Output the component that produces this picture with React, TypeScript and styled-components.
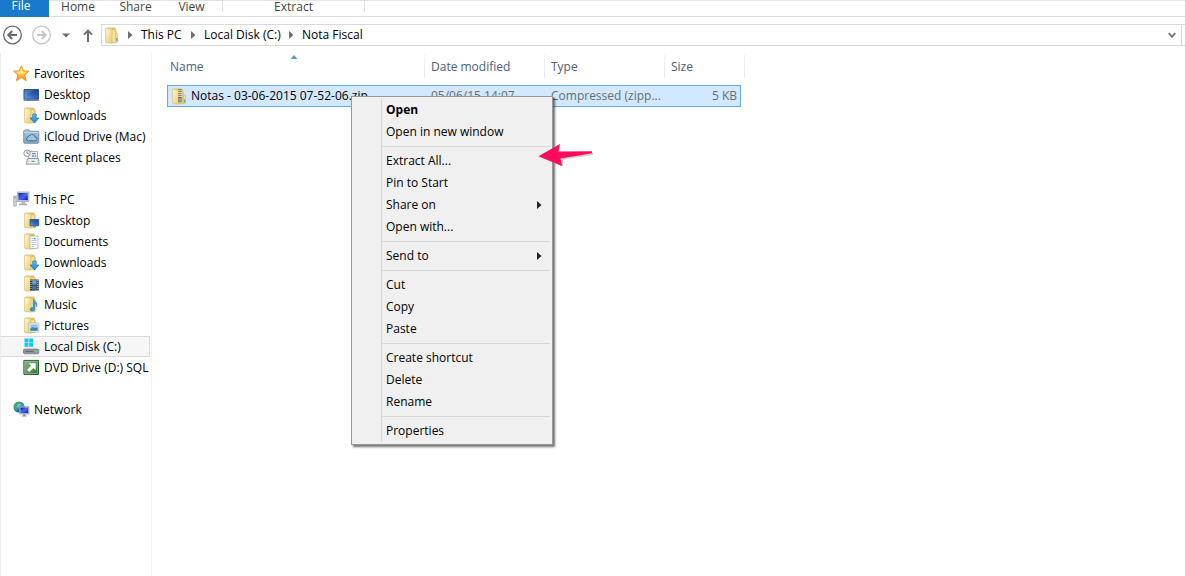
import React from 'react';
import styled, { createGlobalStyle, css } from 'styled-components';

const GlobalStyle = createGlobalStyle`
  * { box-sizing: border-box; }
  body {
    margin: 0;
    background: #fff;
    color: #000;
    font-family: 'Segoe UI', 'Open Sans', 'Noto Sans', sans-serif;
    font-size: 12px;
    line-height: 20px;
  }
  button { font: inherit; color: inherit; background: none; border: 0; padding: 0; margin: 0; }
  ul { list-style: none; margin: 0; padding: 0; }
  svg { display: block; flex: none; }
`;

const Window = styled.div`
  position: relative;
  display: flex;
  flex-direction: column;
  min-height: 100vh;
  overflow: hidden;
`;

/* ---------- Ribbon ---------- */
const Ribbon = styled.div`
  display: flex;
  height: 17px;
  border-top: 1px solid #e3e3e3;
  border-bottom: 1px solid #dadbdc;
  color: #444;
`;
const FileTab = styled.button`
  width: 49px;
  height: 17px;
  margin-top: -1px;
  padding-right: 7px;
  padding-bottom: 6px;
  background: #1979ca;
  color: #fff;
  line-height: 11px;
`;
const Tab = styled.button<{ $width: number; $context?: boolean }>`
  width: ${p => p.$width}px;
  height: 11px;
  line-height: 11px;
  ${p => p.$context && css`
    margin-left: 3px;
    border: solid #e2e3e4;
    border-width: 0 1px;
  `}
`;

/* ---------- Address row ---------- */
const AddressRow = styled.div`
  display: flex;
  align-items: center;
  height: 36px;
  padding-left: 3px;
`;
const NavButton = styled.button<{ $width: number }>`
  display: flex;
  align-items: center;
  width: ${p => p.$width}px;
  height: 22px;
`;
const AddressBox = styled.nav`
  display: flex;
  align-items: center;
  flex: 1;
  height: 22px;
  padding-left: 2px;
  border: 1px solid #d9d9d9;
`;
const AddressEnd = styled.div`
  width: 3px;
  height: 22px;
  border: solid #d9d9d9;
  border-width: 1px 0;
`;
const Crumb = styled.button<{ $width: number }>`
  width: ${p => p.$width}px;
  text-align: left;
  white-space: nowrap;
`;
const Crumbs = styled.div`
  display: flex;
  padding-left: 7px;
`;
const CrumbArrow = styled.span`
  display: flex;
  align-items: center;
  width: 13px;
`;
const HistoryButton = styled.button`
  display: flex;
  align-items: center;
  margin-left: auto;
  padding: 0 5px;
  height: 20px;
`;

/* ---------- Body ---------- */
const Body = styled.div`
  display: flex;
  flex: 1;
  border-left: 1px solid #ececec;
`;
const Sidebar = styled.nav`
  width: 151px;
  flex: none;
  padding: 10px 1px 0 0;
  border-right: 1px solid #f3f3f3;
`;
const Group = styled.ul`
  margin-bottom: 21px;
`;
const Place = styled.a<{ $root?: boolean; $selected?: boolean }>`
  display: flex;
  align-items: center;
  gap: 4px;
  height: 21px;
  padding-left: ${p => (p.$root ? 12 : 22)}px;
  border: 1px solid transparent;
  border-left: 0;
  overflow: hidden;
  color: #000;
  text-decoration: none;
  white-space: nowrap;
  ${p => p.$selected && css`
    background: #f6f6f6;
    border-color: #dcdcdc;
  `}
`;
const Pane = styled.main`
  flex: 1;
  padding: 1px 0 0 15px;
`;

/* ---------- File list ---------- */
const FileTable = styled.table`
  display: block;
  thead, tbody { display: block; }
`;
const HeadRow = styled.tr`
  display: grid;
  grid-template-columns: 258px 120px 120px 80px;
  height: 22px;
  margin-bottom: 9px;
  color: #4c607a;
`;
const HeadCell = styled.th<{ $first?: boolean }>`
  position: relative;
  padding: 3px 0 0 ${p => (p.$first ? 3 : 6)}px;
  border-right: 1px solid;
  border-image: linear-gradient(#f4f7fb, #dbe5f1) 1;
  text-align: left;
  font-weight: 400;
`;
const SortMark = styled.svg`
  position: absolute;
  top: 1px;
  left: 50%;
  margin-left: -6px;
`;
const FileRow = styled.tr`
  display: grid;
  grid-template-columns: 257px 120px 120px 75px;
  width: 574px;
  height: 22px;
  border: 1px solid #66a7e8;
  background: #d1e8ff;
  color: #6d6d6d;
`;
const Cell = styled.td<{ $right?: boolean }>`
  padding: 0 3px 0 6px;
  text-align: ${p => (p.$right ? 'right' : 'left')};
  white-space: nowrap;
`;
const NameCell = styled(Cell)`
  display: flex;
  align-items: center;
  gap: 3px;
  padding-left: 3px;
  color: #000;
`;

/* ---------- Context menu ---------- */
const Menu = styled.div`
  position: absolute;
  top: 96px;
  left: 351px;
  width: 202px;
  padding: 2px;
  border: 1px solid #979797;
  background: linear-gradient(90deg, transparent 27px, #d7d7d7 27px, #d7d7d7 28px, transparent 28px) 2px 2px / 100% calc(100% - 4px) no-repeat #f0f0f0;
  box-shadow: 2px 2px 2px rgba(0, 0, 0, 0.55);
`;
const MenuItem = styled.button<{ $bold?: boolean }>`
  display: flex;
  align-items: center;
  justify-content: space-between;
  width: 100%;
  height: 22px;
  padding: 0 8px 0 32px;
  font-weight: ${p => (p.$bold ? 700 : 400)};
`;
const Separator = styled.hr`
  height: 1px;
  margin: 3px 0 3px 28px;
  border: 0;
  background: #d7d7d7;
`;
const Pointer = styled.svg`
  position: absolute;
  top: 140px;
  left: 536px;
`;

/* ---------- Icons ---------- */
const Gradients = styled.svg`
  position: absolute;
`;
const Defs = () => (
  <Gradients width="0" height="0" aria-hidden="true">
    <defs>
      <linearGradient id="gold" x1="0" x2="1" y1="0" y2="1">
        <stop offset="0" stopColor="#fff8d2" /><stop offset="1" stopColor="#ebcd72" />
      </linearGradient>
      <linearGradient id="goldDark" x1="0" x2="1">
        <stop offset="0" stopColor="#f3dc8e" /><stop offset="1" stopColor="#dab95c" />
      </linearGradient>
      <linearGradient id="screen" x1="0" x2="1" y1="1" y2="0">
        <stop offset="0" stopColor="#6fa6e2" /><stop offset=".5" stopColor="#2f64b4" /><stop offset="1" stopColor="#1c3f91" />
      </linearGradient>
      <linearGradient id="mon" x1="0" x2="1" y1="0" y2="1">
        <stop offset="0" stopColor="#0916a8" /><stop offset=".5" stopColor="#4769ee" /><stop offset="1" stopColor="#0a16a0" />
      </linearGradient>
      <linearGradient id="star" x1="0" x2="0" y1="0" y2="1">
        <stop offset="0" stopColor="#ffdf70" /><stop offset=".5" stopColor="#ffc93c" /><stop offset="1" stopColor="#f78a1d" />
      </linearGradient>
      <linearGradient id="cloudFolder" x1="0" x2="0" y1="0" y2="1">
        <stop offset="0" stopColor="#a9c6dc" /><stop offset="1" stopColor="#7fa5c2" />
      </linearGradient>
      <linearGradient id="down" x1="0" x2="0" y1="0" y2="1">
        <stop offset="0" stopColor="#5cc2f5" /><stop offset="1" stopColor="#1c86d8" />
      </linearGradient>
      <linearGradient id="green" x1="0" x2="1" y1="0" y2="1">
        <stop offset="0" stopColor="#92b98c" /><stop offset="1" stopColor="#2c7430" />
      </linearGradient>
      <radialGradient id="globe" cx=".4" cy=".3">
        <stop offset="0" stopColor="#8fdcf8" /><stop offset="1" stopColor="#1467bb" />
      </radialGradient>
    </defs>
  </Gradients>
);

const Icon = ({ children }: { children: React.ReactNode }) => (
  <svg width="17" height="17" viewBox="0 0 17 17" aria-hidden="true">{children}</svg>
);

const FolderBase = () => (
  <>
    <path d="M2 1.5 3 .8h7.500l1 1v1.500h.8v12.500H2z" fill="url(#goldDark)" stroke="#dcbf6b" strokeWidth=".5" />
    <path d="M8 2.800h3.500v12.700H8z" fill="#f6e3a0" stroke="#d5b660" strokeWidth=".5" />
    <path d="M1.500 1.300 7.800 2.300v14L1.500 15z" fill="url(#gold)" stroke="#dcc074" strokeWidth=".6" />
  </>
);

const FolderIcon = () => (
  <Icon>
    <FolderBase />
    <path d="M11.500 6.500h2.200v8.800h-2.200z" fill="#f0da92" stroke="#d8bc6a" strokeWidth=".5" />
    <path d="M12.300 11h1.200v3h-1.200z" fill="#4ba6dc" />
  </Icon>
);
const ZipIcon = () => (
  <Icon>
    <FolderBase />
    <path d="M12.300 7h2.200v8.500h-2.200z" fill="#f0dc98" stroke="#cfae58" strokeWidth=".5" />
    <path d="M13 11.500h1.200v3H13z" fill="#4ba6dc" />
    <path d="M9 1v9" stroke="#555a66" strokeWidth="3" strokeDasharray="1 1" />
    <path d="M9 1v9" stroke="#b5bac4" strokeWidth="1" />
    <path d="M7.800 9.500h2.400v4.500H7.800z" fill="#a5acb6" stroke="#5b606b" strokeWidth=".7" />
  </Icon>
);
const StarIcon = () => (
  <Icon>
    <path d="m8.300.8 2.100 5 5.600.4-4.300 3.700 1.500 5.800-4.900-3.200-4.800 3.200 1.400-5.800L.6 6.200l5.600-.4z" fill="url(#star)" stroke="#ea8a20" strokeWidth=".9" strokeLinejoin="round" />
    <path d="m8.300 3 1.300 3.700 3.600.4-2.900 2-4.700.2-2.300-2.200 3.600-.5z" fill="#fff0a0" opacity=".7" />
  </Icon>
);
const DesktopIcon = () => (
  <Icon>
    <path d="M.5 3h15.500v12H.5z" fill="#a9b8ca" />
    <path d="M1 3.500h14.500v9.600H1z" fill="url(#screen)" stroke="#1d3f7c" strokeWidth=".7" />
    <path d="M1.500 4h9l-9 6z" fill="#fff" opacity=".12" />
    <path d="M.8 13.500h14.900v1.100H.8z" fill="#4d6c93" />
    <path d="M1.500 13.700h1.600v.7H1.500z" fill="#8fd07c" />
  </Icon>
);
const DownloadsIcon = () => (
  <Icon>
    <FolderBase />
    <path d="M9.800 7h3.400v4h2.700l-4.400 5-4.400-5h2.700z" fill="url(#down)" stroke="#1b6fb8" strokeWidth=".7" />
  </Icon>
);
const ICloudIcon = () => (
  <Icon>
    <path d="M.7 3 1.700 1.900h4.500l1 1.300h8l.6.8v10.600l-.7.7H1.300l-.6-.6z" fill="url(#cloudFolder)" stroke="#6489a6" strokeWidth=".8" />
    <path d="M1.100 4.500h14.300" stroke="#c5dbea" strokeWidth=".8" />
    <path d="M5.200 12.800a1.900 1.900 0 0 1-.2-3.700 2 2 0 0 1 2.100-1.500 2.800 2.800 0 0 1 5 1.400 1.900 1.900 0 0 1 .1 3.800z" fill="#a5c4d9" stroke="#3e6788" strokeWidth=".9" />
  </Icon>
);
const RecentIcon = () => (
  <Icon>
    <path d="M5.500 2.500h9v7h-9z" fill="#eef2f5" stroke="#929ba3" strokeWidth=".8" />
    <path d="M9 4h3.800v1.300H9zM9 6.300h2.200v1.500H9z" fill="#6a95bf" />
    <path d="M11.800 6.300h1.400v1.500h-1.400z" fill="#5aaa64" />
    <path d="M4.500 9.500h11l.8 5.700H3.200z" fill="#d8dde1" stroke="#8c949c" strokeWidth=".8" />
    <path d="M6 11.200h8M5.700 13.300h8.800" stroke="#fff" />
    <path d="M8.500 12.300h3" stroke="#747c84" />
    <circle cx="4" cy="4.200" r="3.200" fill="#f8f8f8" stroke="#8d8d8d" strokeWidth=".9" />
    <path d="M4 2.200v2.200h1.700" fill="none" stroke="#666" strokeWidth=".8" />
  </Icon>
);
const PcIcon = () => (
  <Icon>
    <path d="M.7 5h2.600v10H.7z" fill="#d3d6da" stroke="#8f949a" strokeWidth=".6" />
    <path d="M1.200 6.700h1.400" stroke="#4ba54b" />
    <path d="M4.300 1h11.600v9.500H4.300z" fill="#d7dade" stroke="#94989e" strokeWidth=".7" />
    <path d="M5.400 2h9.400v7.200H5.400z" fill="url(#mon)" />
    <path d="M8.100 10.800h4v1.800h-4zM6 12.400h8.200v1.400H6z" fill="#b8bcc1" />
    <path d="M6 13.800h8.200" stroke="#8d9298" strokeWidth=".7" />
  </Icon>
);
const FolderDesktopIcon = () => (
  <Icon>
    <FolderBase />
    <path d="M7 7.500h8.700v6.300H7z" fill="url(#screen)" stroke="#1e4583" strokeWidth=".7" />
    <path d="M10 14.200h3v.8h-3z" fill="#6c7884" />
  </Icon>
);
const DocumentsIcon = () => (
  <Icon>
    <FolderBase />
    <path d="M7 3h8v12.400H7z" fill="#fff" stroke="#9da6ae" strokeWidth=".7" />
    <path d="M8.400 5.500h2M8.400 7.500h5M8.400 9.500h5M8.400 11.500h5M8.400 13.500h3" stroke="#9bb8d2" strokeWidth=".8" />
    <path d="M10.900 4.900h1.500v1.400h-1.500z" fill="#2c75c0" />
  </Icon>
);
const MoviesIcon = () => (
  <Icon>
    <FolderBase />
    <path d="M7 4.500h8.800v11H7z" fill="#3b4046" />
    <path d="M8 5v10M14.800 5v10" stroke="#dce0e4" strokeWidth=".9" strokeDasharray="1 1" />
    <path d="M9.200 5.100h4.400v4.300H9.200z" fill="#62a5dc" /><path d="M9.200 10.500h4.400v4.300H9.200z" fill="#3678b8" />
    <path d="m9.200 9.400 2-2 2.400 2z" fill="#7c9d56" />
  </Icon>
);
const MusicIcon = () => (
  <Icon>
    <FolderBase />
    <path d="M10.300 3c.4 2.400 5 3.200 3.300 7.800.2-2-.9-3.200-1.800-3.600v5.700c0 2.400-4.600 2.900-4.600.5 0-1.600 1.900-2.100 3.100-1.600z" fill="#2c9be0" stroke="#1674b8" strokeWidth=".5" />
  </Icon>
);
const PicturesIcon = () => (
  <Icon>
    <FolderBase />
    <path d="M6 6h9.800v9H6z" fill="#fff" stroke="#9fa6ac" strokeWidth=".7" />
    <path d="M7.300 7.300h7.400v6.400H7.300z" fill="#8cc5ea" />
    <path d="m7.300 11.700 2.200-1.800 2.300 1.200 2.900-.7v3.300H7.300z" fill="#4e80a6" />
  </Icon>
);
const DiskIcon = () => (
  <Icon>
    <path d="M1.500 .6h4v3.800h-4zM6.200 .6h4v3.800h-4zM1.500 5.100h4v3.700h-4zM6.200 5.100h4v3.700h-4z" fill="#12c8f6" />
    <path d="m2.300 9.800-1.800 2h15.300l-1.800-2z" fill="#c8cdd1" />
    <path d="M.5 11.600h15.300v3.400l-.9.800H1.300l-.8-.8z" fill="#8f989f" stroke="#5f6870" strokeWidth=".6" />
    <path d="M2.300 13.500h8" stroke="#5a6066" strokeWidth=".8" />
    <path d="M12.300 12.800h2.300v1.300h-2.300z" fill="#66e05f" />
  </Icon>
);
const DvdIcon = () => (
  <Icon>
    <path d="M.9 1.400h14.600v14H.9z" fill="url(#green)" stroke="#1e5b25" />
    <path d="M1.800 2.300h12.800v12.200H1.800z" fill="none" stroke="#a7c8a3" strokeWidth=".6" />
    <path d="M5.700 4.300h7v7l-2.300-2.300-4.200 4L4 10.800l4.100-4.100z" fill="#fff" />
  </Icon>
);
const NetworkIcon = () => (
  <Icon>
    <circle cx="6" cy="6" r="5.500" fill="url(#globe)" />
    <path d="M2.300 2.600C4 .6 6 .9 7.200 1.200L6 3 4.500 3.400 4.200 5 2.500 6.200 4 8l-.3 2.200C1.500 8.700.2 5.800 2.300 2.600zM8 3.200l2.200-.6 1 3-2 .7z" fill="#3fae49" />
    <path d="M6.500 5.700H16v7.300H6.500z" fill="#c9d1da" stroke="#7f8b99" strokeWidth=".6" />
    <path d="M7.400 6.500h7.800v5.600H7.400z" fill="url(#mon)" />
    <path d="M10.300 13h2v1.600h-2zM8.800 14.600h5v1h-5z" fill="#8d98a4" />
  </Icon>
);

const CircleArrow = ({ color, flip }: { color: string; flip?: boolean }) => (
  <svg width="20" height="20" viewBox="0 0 20 20" fill="none" stroke={color} aria-hidden="true">
    <circle cx="9.500" cy="10" r="8.800" strokeWidth="1.300" />
    <path d={flip ? 'M5 10h8.500M9.800 6l4 4-4 4' : 'M14 10H5.500M9.200 6l-4 4 4 4'} strokeWidth="2" />
  </svg>
);
const RightTriangle = ({ color }: { color: string }) => (
  <svg width="5" height="8" viewBox="0 0 5 8" aria-hidden="true"><path d="M0 0 4.500 4 0 8z" fill={color} /></svg>
);

/* ---------- Data ---------- */
type PlaceData = { label: string; icon: React.FC; root?: boolean; selected?: boolean };
const groups: PlaceData[][] = [
  [
    { label: 'Favorites', icon: StarIcon, root: true },
    { label: 'Desktop', icon: DesktopIcon },
    { label: 'Downloads', icon: DownloadsIcon },
    { label: 'iCloud Drive (Mac)', icon: ICloudIcon },
    { label: 'Recent places', icon: RecentIcon },
  ],
  [
    { label: 'This PC', icon: PcIcon, root: true },
    { label: 'Desktop', icon: FolderDesktopIcon },
    { label: 'Documents', icon: DocumentsIcon },
    { label: 'Downloads', icon: DownloadsIcon },
    { label: 'Movies', icon: MoviesIcon },
    { label: 'Music', icon: MusicIcon },
    { label: 'Pictures', icon: PicturesIcon },
    { label: 'Local Disk (C:)', icon: DiskIcon, selected: true },
    { label: 'DVD Drive (D:) SQLF', icon: DvdIcon },
  ],
  [{ label: 'Network', icon: NetworkIcon, root: true }],
];

const menuSections = [
  ['Open', 'Open in new window'],
  ['Extract All...', 'Pin to Start', 'Share on', 'Open with...'],
  ['Send to'],
  ['Cut', 'Copy', 'Paste'],
  ['Create shortcut', 'Delete', 'Rename'],
  ['Properties'],
];
const submenus = ['Share on', 'Send to'];

const crumbs = [
  { label: 'This PC', width: 50 },
  { label: 'Local Disk (C:)', width: 85 },
  { label: 'Nota Fiscal', width: 70 },
];

export default function App() {
  return (
    <Window>
      <GlobalStyle />
      <Defs />
      <Ribbon>
        <FileTab>File</FileTab>
        <Tab $width={58}>Home</Tab>
        <Tab $width={57}>Share</Tab>
        <Tab $width={55}>View</Tab>
        <Tab $width={143} $context>Extract</Tab>
      </Ribbon>

      <AddressRow>
        <NavButton $width={29} aria-label="Back"><CircleArrow color="#6b6b6b" /></NavButton>
        <NavButton $width={30} aria-label="Forward"><CircleArrow color="#c6c6c6" flip /></NavButton>
        <NavButton $width={21} aria-label="Recent locations">
          <svg width="8" height="5" viewBox="0 0 8 5"><path d="M0 .5h8l-4 4z" fill="#6e6e6e" /></svg>
        </NavButton>
        <NavButton $width={18} aria-label="Up">
          <svg width="10" height="13" viewBox="0 0 10 13" fill="none" stroke="#6e6e6e"><path d="M5 13V1.800M1 5.600l4-4 4 4" strokeWidth="2" /></svg>
        </NavButton>
        <AddressBox aria-label="Address">
          <FolderIcon />
          <Crumbs>
            {crumbs.map(c => (
              <React.Fragment key={c.label}>
                <CrumbArrow><RightTriangle color="#6e6e6e" /></CrumbArrow>
                <Crumb $width={c.width}>{c.label}</Crumb>
              </React.Fragment>
            ))}
          </Crumbs>
          <HistoryButton aria-label="Previous locations">
            <svg width="8" height="7" viewBox="0 0 8 7" fill="none" stroke="#777"><path d="m.8 1.200 3.200 3.600 3.200-3.600" strokeWidth="2" /></svg>
          </HistoryButton>
        </AddressBox>
        <AddressEnd />
      </AddressRow>

      <Body>
        <Sidebar aria-label="Places">
          {groups.map((group, i) => (
            <Group key={i}>
              {group.map(({ label, icon: PlaceIcon, root, selected }) => (
                <li key={label}>
                  <Place href="#" $root={root} $selected={selected}><PlaceIcon />{label}</Place>
                </li>
              ))}
            </Group>
          ))}
        </Sidebar>

        <Pane>
          <FileTable>
            <thead>
              <HeadRow>
                <HeadCell $first>
                  Name
                  <SortMark width="8" height="4" viewBox="0 0 8 4" aria-hidden="true"><path d="M4 0 7.500 4h-7z" fill="#5b9bc0" /></SortMark>
                </HeadCell>
                <HeadCell>Date modified</HeadCell>
                <HeadCell>Type</HeadCell>
                <HeadCell>Size</HeadCell>
              </HeadRow>
            </thead>
            <tbody>
              <FileRow>
                <NameCell><ZipIcon />Notas - 03-06-2015 07-52-06.zip</NameCell>
                <Cell>05/06/15 14:07</Cell>
                <Cell>Compressed (zipp...</Cell>
                <Cell $right>5 KB</Cell>
              </FileRow>
            </tbody>
          </FileTable>
        </Pane>
      </Body>

      <Menu role="menu">
        {menuSections.map((section, i) => (
          <React.Fragment key={section[0]}>
            {i > 0 && <Separator />}
            {section.map(label => (
              <MenuItem key={label} role="menuitem" $bold={label === 'Open'}>
                {label}
                {submenus.includes(label) && <RightTriangle color="#222" />}
              </MenuItem>
            ))}
          </React.Fragment>
        ))}
      </Menu>

      <Pointer width="60" height="32" viewBox="0 0 60 32" aria-hidden="true">
        <path d="m4 17 20-11-1 6.500 34 .5v2L27 19.500 27 26.500z" fill="#888" opacity=".4" />
        <path d="M2.500 16.300 24 4l-1.500 7.500L56 11.300v1.900L24.500 18.500 26 26z" fill="#ff0a5e" />
      </Pointer>
    </Window>
  );
}
